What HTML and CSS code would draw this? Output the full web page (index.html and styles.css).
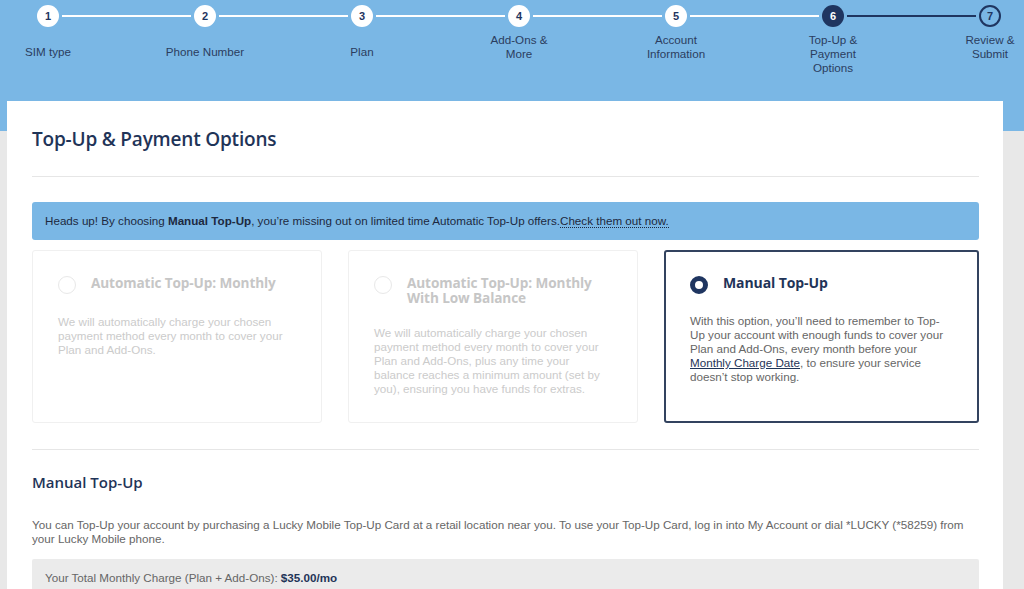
FILE: index.html
```html
<!DOCTYPE html>
<html lang="en">
<head>
<meta charset="utf-8">
<title>Top-Up &amp; Payment Options</title>
<link rel="stylesheet" href="styles.css">
</head>
<body>
<div class="page">
  <nav class="stepper">
    <div class="step done first">
      <div class="track"><span class="dot">1</span></div>
      <div class="label single">SIM type</div>
    </div>
    <div class="step done">
      <div class="track"><span class="dot">2</span></div>
      <div class="label single">Phone Number</div>
    </div>
    <div class="step done">
      <div class="track"><span class="dot">3</span></div>
      <div class="label single">Plan</div>
    </div>
    <div class="step done">
      <div class="track"><span class="dot">4</span></div>
      <div class="label">Add-Ons &amp;<br>More</div>
    </div>
    <div class="step done">
      <div class="track"><span class="dot">5</span></div>
      <div class="label">Account<br>Information</div>
    </div>
    <div class="step current">
      <div class="track"><span class="dot">6</span></div>
      <div class="label">Top-Up &amp;<br>Payment<br>Options</div>
    </div>
    <div class="step todo last">
      <div class="track"><span class="dot">7</span></div>
      <div class="label">Review &amp;<br>Submit</div>
    </div>
  </nav>

  <main class="card">
    <h1 class="title">Top-Up &amp; Payment Options</h1>
    <hr class="rule">
    <div class="alert">Heads up! By choosing <b>Manual Top-Up</b>, you’re missing out on limited time Automatic Top-Up offers.<a class="alert-link" href="#">Check them out now.</a></div>

    <div class="options">
      <div class="option faded">
        <div class="option-head">
          <span class="radio"></span>
          <span class="option-title">Automatic Top-Up: Monthly</span>
        </div>
        <p class="option-text">We will automatically charge your chosen payment method every month to cover your Plan and Add-Ons.</p>
      </div>
      <div class="option faded">
        <div class="option-head">
          <span class="radio"></span>
          <span class="option-title">Automatic Top-Up: Monthly With Low Balance</span>
        </div>
        <p class="option-text">We will automatically charge your chosen payment method every month to cover your Plan and Add-Ons, plus any time your balance reaches a minimum amount (set by you), ensuring you have funds for extras.</p>
      </div>
      <div class="option selected">
        <div class="option-head">
          <span class="radio"></span>
          <span class="option-title">Manual Top-Up</span>
        </div>
        <p class="option-text">With this option, you’ll need to remember to Top-Up your account with enough funds to cover your Plan and Add-Ons, every month before your <a class="text-link" href="#">Monthly Charge Date</a>, to ensure your service doesn’t stop working.</p>
      </div>
    </div>

    <hr class="rule rule-2">
    <h2 class="subtitle">Manual Top-Up</h2>
    <p class="body-text">You can Top-Up your account by purchasing a Lucky Mobile Top-Up Card at a retail location near you. To use your Top-Up Card, log in into My Account or dial *LUCKY (*58259) from your Lucky Mobile phone.</p>
    <div class="total">Your Total Monthly Charge (Plan + Add-Ons): <b>$35.00/mo</b></div>
  </main>
</div>
</body>
</html>
```

FILE: styles.css
```css
html, body {
  margin: 0;
  padding: 0;
}
body {
  width: 1024px;
  height: 589px;
  overflow: hidden;
  background: linear-gradient(#7ab7e5 0, #7ab7e5 131px, #e8e8e8 131px);
  font-family: "Liberation Sans", Arial, sans-serif;
}
.page {
  width: 1024px;
}

/* Stepper */
.stepper {
  display: grid;
  grid-template-columns: repeat(7, 157px);
  margin-left: -30.5px;
  height: 101px;
}
.step {
  display: flex;
  flex-direction: column;
  align-items: stretch;
}
.track {
  display: flex;
  align-items: center;
  margin-top: 5px;
  height: 22px;
}
.track::before,
.track::after {
  content: "";
  flex: 1;
  height: 2px;
  background: #ffffff;
}
.track::before { margin-right: 3px; }
.track::after { margin-left: 3px; }
.first .track::before,
.last .track::after {
  background: transparent;
}
.current .track::after,
.todo .track::before {
  background: #1f3560;
}
.dot {
  width: 22px;
  height: 22px;
  box-sizing: border-box;
  border-radius: 50%;
  background: #ffffff;
  color: #1f3560;
  font-size: 11px;
  font-weight: bold;
  display: flex;
  align-items: center;
  justify-content: center;
}
.current .dot {
  background: #1f3560;
  color: #ffffff;
}
.todo .dot {
  background: transparent;
  border: 2px solid #1f3560;
}
.label {
  margin-top: 6px;
  text-align: center;
  font-size: 11.65px;
  line-height: 14px;
  color: #2b3d5f;
}
.label.single {
  padding-top: 12px;
}

/* Card */
.card {
  width: 996px;
  margin-left: 7px;
  min-height: 500px;
  box-sizing: border-box;
  background: #ffffff;
  padding: 26px 24px 0 25px;
}
.title {
  margin: 0;
  font-family: "Open Sans", "Noto Sans", sans-serif;
  font-weight: 600;
  font-size: 19px;
  line-height: 24px;
  color: #1f3458;
  letter-spacing: -0.2px;
}
.rule {
  border: 0;
  height: 1px;
  background: #e6e6e6;
  margin: 25px 0 25px;
}
.alert {
  background: #7ab7e5;
  border-radius: 3px;
  height: 38px;
  box-sizing: border-box;
  padding: 11px 13px;
  font-size: 11.65px;
  line-height: 16px;
  color: #1d2940;
}
.alert b { color: #1d2940; }
.alert-link {
  color: #1d2940;
  text-decoration: none;
  border-bottom: 1px dotted #1d2940;
}

/* Options */
.options {
  display: grid;
  grid-template-columns: 290px 290px 315px;
  column-gap: 26px;
  margin-top: 10px;
}
.option {
  height: 173px;
  box-sizing: border-box;
  border-radius: 3px;
  padding: 22px 25px 0 25px;
}
.option.faded {
  border: 1px solid #f0f0f0;
}
.option.selected {
  border: 2px solid #33435f;
  padding: 21px 24px 0 24px;
}
.option-head {
  display: flex;
  align-items: flex-start;
  gap: 15px;
}
.radio {
  flex: none;
  width: 18px;
  height: 18px;
  box-sizing: border-box;
  border-radius: 50%;
  border: 1px solid #e8e8e8;
  margin-top: 3px;
}
.selected .radio {
  border: 5.5px solid #1f3560;
  background: #ffffff;
}
.option-title {
  font-family: "Open Sans", "Noto Sans", sans-serif;
  font-weight: 700;
  font-size: 13.6px;
  line-height: 15px;
  padding-top: 2px;
  color: #c6c6c6;
  letter-spacing: -0.1px;
}
.selected .option-title {
  color: #1f3458;
  font-size: 14px;
}
.option-text {
  margin: 21px 0 0;
  font-size: 11.65px;
  line-height: 14px;
  color: #cbcbcb;
}
.selected .option-text {
  margin-top: 20px;
  color: #666666;
}
.text-link {
  color: #1f3458;
  text-decoration: underline;
  text-underline-offset: 1px;
}

.rule-2 {
  margin-top: 26px;
  margin-bottom: 23px;
}
.subtitle {
  margin: 0;
  font-family: "Open Sans", "Noto Sans", sans-serif;
  font-weight: 600;
  font-size: 15px;
  line-height: 18px;
  color: #1f3458;
}
.body-text {
  margin: 27px 0 13px;
  font-size: 11.65px;
  line-height: 14px;
  color: #666666;
}
.total {
  background: #ebebeb;
  border-radius: 2px;
  padding: 12px 13px;
  font-size: 11.65px;
  line-height: 14px;
  color: #666666;
}
.total b {
  color: #1f3458;
}
```
